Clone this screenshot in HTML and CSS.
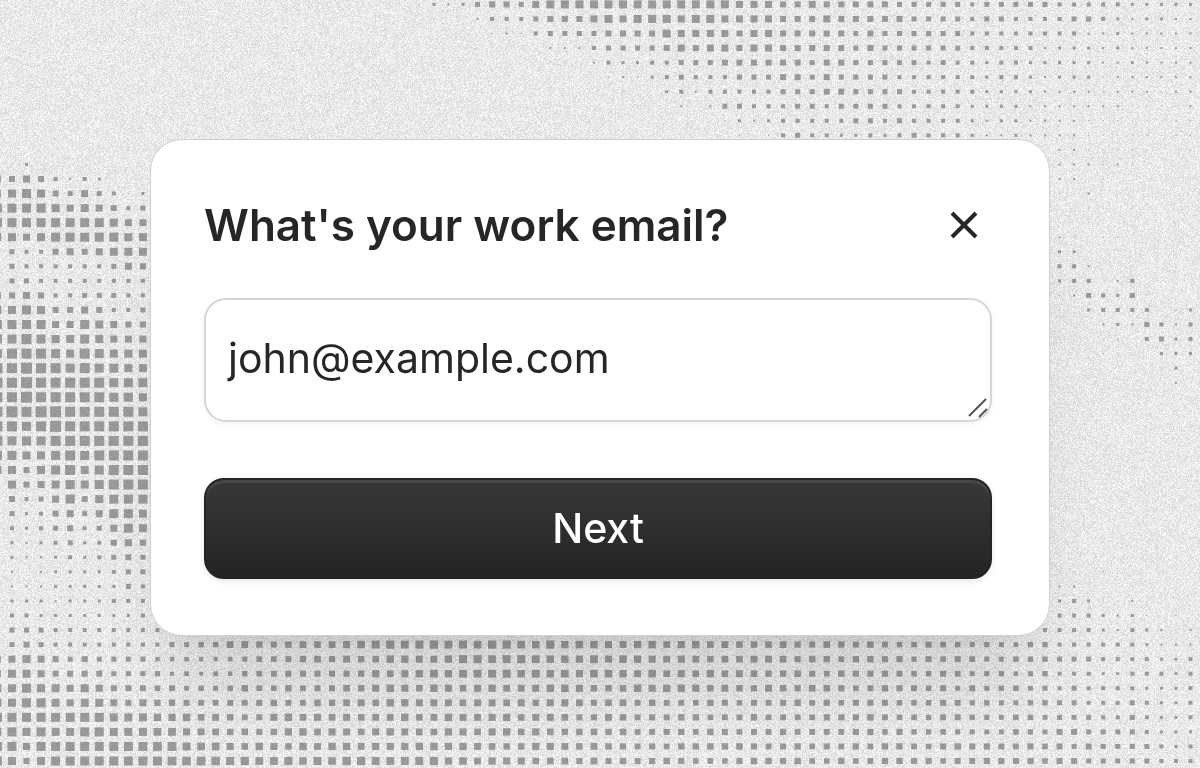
FILE: index.html
```html
<!DOCTYPE html>
<html lang="en">
<head>
  <meta charset="UTF-8" />
  <title>Work email</title>
  <meta name="viewport" content="width=device-width, initial-scale=1.0" />
  <link rel="stylesheet" href="styles.css">
</head>
<body>
  <canvas id="backdrop" aria-hidden="true"></canvas>

  <form class="card" onsubmit="return false">
    <div class="card-header">
      <h1><label for="email">What's your work email?</label></h1>
      <button type="button" class="close" aria-label="Close">
        <svg viewBox="0 0 28 28" width="28" height="28">
          <path d="M2 2 26 26M26 2 2 26" />
        </svg>
      </button>
    </div>

    <div class="field">
      <textarea id="email" rows="1" spellcheck="false">john@example.com</textarea>
      <svg class="grip" viewBox="0 0 20 20" width="20" height="20" aria-hidden="true">
        <path d="M1 18 18 1M11 19 19 11" />
      </svg>
    </div>

    <button type="submit" class="next">Next</button>
  </form>

  <script src="backdrop.js"></script>
</body>
</html>
```

FILE: styles.css
```css
* { margin: 0; padding: 0; box-sizing: border-box; }

body {
  min-height: 100vh;
  padding: 6px 16px 0;
  display: flex;
  align-items: center;
  justify-content: center;
  background: #e9e9e9;
  color: #262626;
  font-family: Inter, "Liberation Sans", sans-serif;
}

#backdrop {
  position: fixed;
  inset: 0;
  width: 100%;
  height: 100%;
  z-index: -1;
}

.card {
  width: 100%;
  max-width: 900px;
  padding: 60px 57px 56px 53px;
  background: #fff;
  border: 1px solid #d0d0d0;
  border-radius: 32px;
  box-shadow:
    0 16px 24px -16px rgba(0, 0, 0, 0.1),
    0 80px 80px -24px rgba(0, 0, 0, 0.1);
}

.card-header {
  display: flex;
  align-items: center;
  justify-content: space-between;
  margin-bottom: 48px;
}

h1 {
  font-size: 44px;
  font-weight: 600;
  line-height: 50px;
}

.close {
  display: flex;
  padding: 14px;
  margin: -14px 0;
  background: none;
  border: none;
  cursor: pointer;
}

.close path {
  fill: none;
  stroke: #262626;
  stroke-width: 4;
}

.field {
  position: relative;
  margin-bottom: 56px;
}

textarea {
  display: block;
  width: 100%;
  height: 124px;
  padding: 34px 22px;
  overflow: hidden;
  resize: none;
  background: #fff;
  color: #262626;
  border: 2px solid #d6d6d6;
  border-radius: 22px;
  box-shadow: 0 2px 6px rgba(0, 0, 0, 0.05);
  font: 400 41px/48px Inter, "Liberation Sans", sans-serif;
  outline: none;
}

.grip {
  position: absolute;
  right: 4px;
  bottom: 4px;
  pointer-events: none;
}

.grip path {
  fill: none;
  stroke: #555;
  stroke-width: 2;
}

.next {
  display: block;
  width: 100%;
  height: 101px;
  background: linear-gradient(#383838, #242424);
  color: #fff;
  border: 2px solid #242424;
  border-radius: 20px;
  box-shadow: inset 0 3px 0 #484848, 0 2px 6px rgba(0, 0, 0, 0.1);
  font: 500 41px/48px Inter, "Liberation Sans", sans-serif;
  cursor: pointer;
}
```

FILE: backdrop.js
```js
const canvas = document.getElementById("backdrop");
const ctx = canvas.getContext("2d");

const PITCH = 14.55;
const OFFSET_X = -2.6;
const OFFSET_Y = 4.4;

// Each digit is a dot size in pixels (hex), one string per grid row.
// blocks: first column, first row, rows
const blocks = [
  // top
  [29, 0, [
    "132356657888888888888877766" + "766666555554555554444433333232",
    "010024445666787888788777766" + "676666655554554444554323322222",
    "000001214555566668777767766" + "666565555554444444422322222",
    "000000000222455556767767766" + "666565555554444423332322222",
    "000000000110243344555666666" + "566555554544344333332232222",
    "000000000000012134544455566" + "565555444444344323331222222",
    "000000000000001003424444455" + "566555544444333322221222122",
    "000000000000000000202554445" + "545555444443333222222211112",
    "000000000000000000000132344" + "444554544443233222211111111",
    "000000000000000000000010145" + "443343454443223222211111111"
  ]],
  // left
  [0, 11, [
    "01310000000", "76764243000", "78986575413", "99998787645",
    "99999999877", "88789999988", "05446767888", "05444444576",
    "05544444444", "76764455544", "88986676445", "99997798766",
    "99a98898777", "9aaa98a9888", "aabaa9a9988", "aabaaaaa999",
    "aabaaaaa998", "ababbaaaaa9", "aa9abaaaaaa", "a999aaaaaaa",
    "99889a9aaaa", "88689a89aaa", "08678989aaa", "06457968999",
    "05346757998", "04345645798", "03234534676", "03223434565",
    "02123333455", "02223333354", "03332333444", "04433333334",
    "05554444444", "55654444444", "77876565555", "78876666555",
    "88988787666", "88998788767", "99999999888", "89898899888",
    "99799999999", "98689999999"
  ]],
  // right
  [73, 10, [
    "2211111011", "2221211000", "2201000000", "1120000000",
    "0011010000", "0010000000", "2101100000", "3300000000",
    "4420010000", "3440240000", "1254351000", "1034444013",
    "0002325424", "0001104534", "0001100333", "0000000030",
    "0000000020"
  ]],
  // bottom right
  [73, 39, [
    "1101000000", "2200000000", "3431120000", "4443231010",
    "4443243212", "4444443222", "5554444334", "4443344434",
    "4544443334", "5544454334", "5554454334", "6655554333",
    "6565555434", "6655555444"
  ]]
];

// The bottom band changes slowly, so only some columns are listed.
const bandCols = [10, 14, 17, 20, 27, 34, 47, 60, 72];
const bandRows = [
  "457688765", "545678765", "545678765", "656677765", "666677665",
  "776777665", "876777665", "987777666", "998887666"
];

function random(seed) {
  let s = seed;
  return () => {
    s = (s * 1664525 + 1013904223) >>> 0;
    return s / 4294967296;
  };
}

function dot(col, row, size) {
  if (size <= 0) return;
  const x = OFFSET_X + col * PITCH;
  const y = OFFSET_Y + row * PITCH;
  ctx.fillRect(x - size / 2, y - size / 2, size, size);
}

function drawDots() {
  ctx.fillStyle = "#999";
  blocks.forEach(([col, row, rows]) => {
    rows.forEach((line, r) => {
      [...line].forEach((d, c) => dot(col + c, row + r, parseInt(d, 16)));
    });
  });
  dot(11, 43, 4);
  dot(72, 43, 4);

  const rand = random(7);
  bandRows.forEach((line, r) => {
    for (let k = 0; k < bandCols.length - 1; k++) {
      const from = bandCols[k];
      const to = bandCols[k + 1];
      for (let c = from + 1; c <= to; c++) {
        const t = (c - from) / (to - from);
        const size = +line[k] * (1 - t) + +line[k + 1] * t;
        dot(c, 44 + r, size + rand() - 0.5);
      }
    }
  });
}

function addGrain() {
  const image = ctx.getImageData(0, 0, canvas.width, canvas.height);
  const px = image.data;
  const rand = random(42);
  for (let i = 0; i < px.length; i += 4) {
    // dots take less grain than the paper
    const amount = px[i] < 200 ? 16 : 38;
    const n = (rand() - 0.5) * amount;
    px[i] += n;
    px[i + 1] += n;
    px[i + 2] += n;
  }
  ctx.putImageData(image, 0, 0);
}

function draw() {
  canvas.width = window.innerWidth;
  canvas.height = window.innerHeight;
  ctx.fillStyle = "#e9e9e9";
  ctx.fillRect(0, 0, canvas.width, canvas.height);
  drawDots();
  addGrain();
}

window.addEventListener("resize", draw);
draw();
```
